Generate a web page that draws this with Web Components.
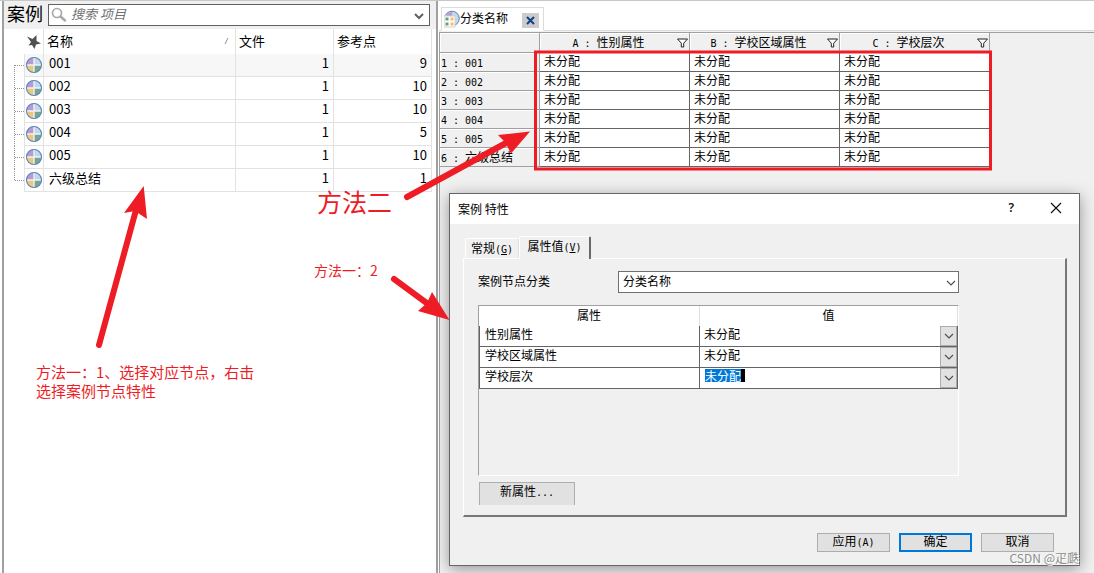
<!DOCTYPE html>
<html lang="zh-CN">
<head>
<meta charset="utf-8">
<title>案例</title>
<style>
  html, body { margin: 0; height: 100%; }
  body { overflow: hidden; background: #fff; color: #000; font: 13px/17px "Noto Sans CJK SC", sans-serif; }
</style>
</head>
<body>
<app-workspace>
  <case-list slot="list"></case-list>
  <class-sheet slot="sheet"></class-sheet>
  <case-dialog slot="dialog"></case-dialog>
  <mark-layer slot="marks"></mark-layer>
</app-workspace>

<script>
const define = (name, html) => customElements.define(name, class extends HTMLElement {
  constructor() {
    super();
    const root = this.attachShadow({ mode: 'open' });
    const t = document.createElement('template');
    t.innerHTML = '<style>*{box-sizing:border-box}</style>' + (typeof html === 'function' ? html(this) : html);
    root.append(t.content.cloneNode(true));
  }
});

define('case-icon', `
  <style>:host{display:block;width:18px;height:18px} svg{display:block}</style>
  <svg width="18" height="18" viewBox="0 0 18 18" aria-hidden="true">
    <circle cx="9" cy="9" r="8" fill="#eef3f8"/>
    <path d="M8.300 8.300H1.500A7.500 7.500 0 0 1 8.300 1.500z" fill="#b89bd0"/>
    <path d="M9.700 8.300h6.800A7.500 7.500 0 0 0 9.700 1.500z" fill="#c4d6e8"/>
    <path d="M8.300 9.700H1.500A7.500 7.500 0 0 0 8.300 16.500z" fill="#f0c67c"/>
    <path d="M9.700 9.700h6.800A7.500 7.500 0 0 1 9.700 16.500z" fill="#78a592"/>
    <circle cx="9" cy="9" r="7.500" fill="none" stroke="#5486bd" stroke-width="1.100"/>
  </svg>`);

define('tree-branch', el => {
  const kind = el.getAttribute('kind');
  const top = kind === 'first' ? 11 : 0, end = kind === 'last' ? 12 : 23;
  return `<style>:host{display:block} svg{display:block}</style>
  <svg width="20" height="23" viewBox="0 0 20 23" aria-hidden="true">
    <path d="M10.500 ${top}V${end}M11 11.500H20" stroke="#909090" stroke-dasharray="1 1" fill="none"/>
  </svg>`;
});

const cases = [['001',1,9],['002',1,10],['003',1,10],['004',1,5],['005',1,10],['六级总结',1,1]];

define('case-list', `
  <style>
    :host{display:block;height:100%;background:#fff}
    .bar{display:flex;align-items:center;gap:5px;height:28px;padding:0 6px 0 3px;background:#f0f0f0}
    h1{margin:0 0 4px;font-size:18px;line-height:24px;font-weight:400}
    .search{flex:1;display:flex;align-items:center;height:22px;border:1px solid #606060;background:#fff;padding:0 4px 0 2px}
    .search input{flex:1;min-width:0;border:0;outline:0;padding:0 0 2px 4px;font:italic 13px/18px "Noto Sans CJK SC",sans-serif;background:none}
    .search input::placeholder{color:#707070;opacity:1}
    .search button{border:0;background:none;padding:0;height:18px;width:12px}
    svg{display:block}
    table{table-layout:fixed;border-collapse:separate;border-spacing:0;width:calc(100% - 4px)}
    th{height:25px;padding:0 0 2px 3px;text-align:left;font-weight:400;border-right:1px solid #e2e2e2}
    th:first-child{border-right-color:transparent}
    th.pin{padding:0 0 0 1px}
    td{height:23px;padding:0 4px 5px 5px;border:solid #e2e2e2;border-width:0 1px 1px 0}
    td.tree{padding:0;border-bottom:0}
    td.icon{padding:0}
    td.n{text-align:right}
    tr.on td:not(.tree){background:#f7f7f7}
    .name{display:flex;justify-content:space-between;align-items:center;padding-right:6px}
  </style>
  <div class="bar">
    <h1>案例</h1>
    <div class="search">
      <svg width="16" height="16" viewBox="0 0 16 16" aria-hidden="true"><circle cx="6" cy="6" r="4.500" fill="none" stroke="#a8a8a8" stroke-width="1.700"/><path d="M9.500 9.500L14 13.500" stroke="#a8a8a8" stroke-width="2.500" stroke-linecap="round"/></svg>
      <input type="text" placeholder="搜索 项目" aria-label="搜索 项目">
      <button aria-label="展开"><svg width="12" height="18" viewBox="0 0 12 18"><path d="M2 8l4 4 4-4" fill="none" stroke="#606060" stroke-width="2"/></svg></button>
    </div>
  </div>
  <table>
    <colgroup><col style="width:21px"><col style="width:19px"><col><col style="width:98px"><col style="width:98px"></colgroup>
    <thead><tr>
      <th></th>
      <th class="pin"><svg width="16" height="16" viewBox="0 0 16 16" aria-hidden="true"><path d="M1 2.500L6.500 5 10.500 1 10.500 7 15 9.500 10 10.500 8.500 15 6 11 2.500 11.500 5 8z" fill="#505050"/></svg></th>
      <th><div class="name"><span>名称</span><svg width="5" height="8" viewBox="0 0 5 8" aria-hidden="true"><path d="M1 7L4 1" stroke="#909090"/></svg></div></th>
      <th>文件</th><th>参考点</th>
    </tr></thead>
    <tbody>${cases.map((c, i) => `<tr class="${i ? '' : 'on'}">
      <td class="tree"><tree-branch kind="${i === 0 ? 'first' : i === cases.length - 1 ? 'last' : 'mid'}"></tree-branch></td>
      <td class="icon"><case-icon></case-icon></td>
      <td>${c[0]}</td><td class="n">${c[1]}</td><td class="n">${c[2]}</td></tr>`).join('')}</tbody>
  </table>`);

const funnel = `<svg width="11" height="10" viewBox="0 0 11 10" aria-hidden="true"><path d="M.500 1h10L6.700 5.200V9H4.300V5.200z" fill="#fff" stroke="#222"/></svg>`;

define('class-sheet', `
  <style>
    :host{display:flex;flex-direction:column;height:100%;background:#f0f0f0}
    .tabs{display:flex;align-items:flex-end;height:30px;background:#fff;border-bottom:1px solid #dcdcdc;padding-left:2px}
    .tab{display:flex;align-items:center;height:24px;margin-bottom:-1px;padding:0 4px 0 2px;border:1px solid #dcdcdc;border-bottom-color:#fff;background:#fff;font-size:12px;line-height:16px}
    .tab span{margin:0 14px 2px 0}
    .tab button{width:17px;height:15px;margin-top:2px;padding:0;border:0;background:#ccc;display:grid;place-items:center}
    svg{display:block}
    .grid{border-top:1px solid #a0a0a0;border-left:1px solid #a0a0a0;margin-top:1px;flex:1}
    table{table-layout:fixed;border-collapse:separate;border-spacing:0;width:550px;font-size:12px;line-height:15px}
    th{font-weight:400;background:#f0f0f0;border:solid #a0a0a0;border-width:0 1px 1px 0;box-shadow:inset 1px 1px #fff;padding:0}
    thead th{height:20px}
    thead th div{display:flex;align-items:center;padding-right:1px}
    thead th div span{flex:1;text-align:center}
    tbody th{text-align:left;padding-left:1px;white-space:nowrap}
    td{height:19px;background:#fff;border:solid #646464;border-width:0 1px 1px 0;padding:0 0 3px 4px}
    i{font:10px/15px "DejaVu Sans Mono",monospace;white-space:pre}
  </style>
  <div class="tabs"><div class="tab">
    <svg width="16" height="18" viewBox="0 0 16 18" aria-hidden="true">
      <circle cx="8" cy="8.500" r="7.300" fill="#c4d6e8" stroke="#5486bd"/><path d="M8 8V2a6 6 0 0 0-6 6z" fill="#b89bd0"/>
      <path d="M0 6h11v11H0z" fill="#fff" stroke="#d8d0c0"/><path d="M1.500 7.500h3v3h-3zM1.500 12.500h3v3h-3z" fill="#6a9c84"/><path d="M6.500 7.500h3v3h-3zM6.500 12.500h3v3h-3z" fill="#edc070"/>
    </svg>
    <span>分类名称</span>
    <button aria-label="关闭"><svg width="9" height="9" viewBox="0 0 9 9"><path d="M1 1l7 7M8 1L1 8" stroke="#153f88" stroke-width="2"/></svg></button>
  </div></div>
  <div class="grid"><table>
    <colgroup><col style="width:100px"><col><col><col></colgroup>
    <thead><tr><th></th>${[['A','性别属性'],['B','学校区域属性'],['C','学校层次']].map(h => `<th><div><span><i>${h[0]} : </i>${h[1]}</span>${funnel}</div></th>`).join('')}</tr></thead>
    <tbody>${cases.map((c, i) => `<tr><th><i>${i + 1} : ${i < 5 ? c[0] : ''}</i>${i < 5 ? '' : c[0]}</th><td>未分配</td><td>未分配</td><td>未分配</td></tr>`).join('')}</tbody>
  </table></div>`);

define('push-button', `
  <style>
    :host{display:block}
    button{display:block;width:100%;height:19px;padding:0 0 3px;border:1px solid #adadad;background:#e1e1e1;color:#000;font:12px/14px "Noto Sans CJK SC",sans-serif}
    :host([primary]) button{border:2px solid #0078d7;padding:0 0 3px;line-height:12px}
    :host([tall]) button{height:23px;border-bottom:0}
    ::slotted(i){font:10px/12px "DejaVu Sans Mono",monospace}
  </style><button><slot></slot></button>`);

const chev = `<svg width="10" height="8" viewBox="0 0 10 8" aria-hidden="true"><path d="M1 2l4 4 4-4" fill="none" stroke="#505050" stroke-width="1.200"/></svg>`;

define('case-dialog', `
  <style>
    :host{display:block;border:1px solid #666;background:#f0f0f0;box-shadow:0 3px 14px rgba(0,0,0,.38);font-size:12px;line-height:16px}
    svg{display:block}
    header{display:flex;align-items:center;height:30px;background:#fff;padding:0 17px 0 8px}
    h2{flex:1;margin:0;font-size:12px;font-weight:400}
    header button{border:0;background:none;padding:0 0 2px;font:600 12px/16px "Noto Sans",sans-serif;color:#111}
    header button:last-child{margin-left:36px}
    .body{padding:11px 12px 13px 13px}
    .tabs{display:flex;align-items:flex-end;height:23px;padding-left:2px}
    .tabs button{font:12px/16px "Noto Sans CJK SC",sans-serif;color:#000;background:#f0f0f0;border:1px solid #fff;border-bottom:0;border-right-color:#e0e0e0;height:20px;width:54px;padding:0;white-space:nowrap;border-radius:2px 2px 0 0}
    .tabs button.on{height:23px;width:72px;margin-bottom:-1px;padding:0 0 2px;border-right:2px solid #696969;position:relative}
    i{font:10px/16px "DejaVu Sans Mono",monospace}
    .page{border:solid;border-width:1px 2px 2px 1px;border-color:#fff #777 #777 #fff;height:259px;padding:12px 106px 0 14px}
    .field{display:flex;align-items:center;height:22px}
    .field label{width:140px;padding-bottom:2px}
    .pick{position:relative;flex:1;display:flex}
    select{appearance:none;border:0;border-radius:0;outline:0;background:#fff;color:#000;font:12px/16px "Noto Sans CJK SC",sans-serif;flex:1;min-width:0;padding:0 0 2px 4px}
    .field select{height:22px;border:1px solid #707070}
    .field svg{position:absolute;right:3px;top:8px}
    .box{margin-top:12px;height:171px;border:1px solid;border-color:#a0a0a0 #fff #fff #a0a0a0}
    table{table-layout:fixed;width:100%;border-collapse:separate;border-spacing:0;background:#fff}
    th{font-weight:400;height:20px;padding:0 0 2px;border-right:1px solid #e0e0e0}
    td{height:21px;padding:0 0 0 5px;border:solid #646464;border-width:0 1px 1px 0;line-height:15px}
    td:first-child{border-left-width:1px;padding-bottom:5px}
    td:last-child{padding:0}
    .cell{display:flex;height:20px}
    .cell select{padding-bottom:5px}
    .edit{flex:1;display:flex;align-items:flex-start;padding:1px 0 0 5px}
    .edit input{width:36px;height:13px;border:0;outline:0;padding:0;margin:0;background:#0078d7;color:#fff;font:12px/13px "Noto Sans CJK SC",sans-serif}
    .edit span{width:4px;height:13px;background:#000}
    .cell button{width:17px;height:20px;padding:0;border:1px solid #adadad;background:#e1e1e1;display:grid;place-items:center}
    .new{width:96px;margin:6px 0 0 1px}
    .foot{display:flex;justify-content:flex-end;gap:9px;margin-top:16px;padding-right:13px}
    .foot push-button{width:73px}
  </style>
  <header><h2>案例 特性</h2><button aria-label="帮助">?</button><button aria-label="关闭"><svg width="12" height="12" viewBox="0 0 12 12"><path d="M1 1l10 10M11 1L1 11" stroke="#111" stroke-width="1.200"/></svg></button></header>
  <div class="body">
    <div class="tabs"><button>常规<i>(<u>G</u>)</i></button><button class="on">属性值<i>(<u>V</u>)</i></button></div>
    <div class="page">
      <div class="field"><label for="kind">案例节点分类</label><div class="pick"><select id="kind"><option>分类名称</option></select>${chev}</div></div>
      <div class="box"><table>
        <colgroup><col style="width:221px"><col></colgroup>
        <thead><tr><th>属性</th><th>值</th></tr></thead>
        <tbody>
          ${['性别属性','学校区域属性'].map(n => `<tr><td>${n}</td><td><div class="cell"><select aria-label="${n}"><option>未分配</option></select><button aria-label="展开">${chev}</button></div></td></tr>`).join('')}
          <tr><td>学校层次</td><td><div class="cell"><div class="edit"><input type="text" value="未分配" aria-label="学校层次"><span></span></div><button aria-label="展开">${chev}</button></div></td></tr>
        </tbody>
      </table></div>
      <push-button class="new" tall>新属性<i>...</i></push-button>
    </div>
    <div class="foot"><push-button>应用<i>(A)</i></push-button><push-button primary>确定</push-button><push-button>取消</push-button></div>
  </div>`);

define('mark-layer', `
  <style>
    :host{display:block;color:#ee1c25}
    svg{position:absolute;left:0;top:0}
    p{position:absolute;margin:0;white-space:nowrap}
    .two{left:317px;top:183px;font-size:25px;line-height:36px}
    .next{left:314px;top:260px;font-size:14px;line-height:20px}
    .one{left:36px;top:362px;font-size:15px;line-height:19px}
    .wm{right:15px;bottom:7px;font-size:12px;line-height:18px;color:#8c8c8c;text-shadow:1px 1px #fff}
  </style>
  <svg width="1000" height="360" viewBox="0 0 1000 360" aria-hidden="true">
    <rect x="535.500" y="52" width="455" height="117" fill="none" stroke="#ee1c25" stroke-width="3"/>
    <g stroke="#ee1c25" stroke-width="6" stroke-linecap="round"><path d="M99 345L136 210M407 197L506 143M394 279L428 304"/></g>
    <g fill="#ee1c25"><path d="M143.700 186L124 213 135 211 147 219z"/><path d="M530 131.500L498 135 505 142 511 153.500z"/><path d="M449.500 320L432 292 427 303 418 311z"/></g>
  </svg>
  <p class="two">方法二</p>
  <p class="next">方法一：2</p>
  <p class="one">方法一：1、选择对应节点，右击<br>选择案例节点特性</p>
  <p class="wm">CSDN @疋瓞</p>`);

define('app-workspace', `
  <style>
    :host{display:flex;position:relative;height:100vh;border-top:1px solid #c8c8c8;padding-left:2px}
    .left{flex:0 0 436px;border:solid #a0a0a0;border-width:0 2px}
    .right{flex:1;min-width:0;position:relative;margin-left:1px}
    .dialog{position:absolute;left:10px;right:14px;top:192px}
    .marks{position:absolute;inset:-1px 0 0 0;pointer-events:none}
  </style>
  <div class="left"><slot name="list"></slot></div>
  <div class="right"><slot name="sheet"></slot><div class="dialog"><slot name="dialog"></slot></div></div>
  <div class="marks"><slot name="marks"></slot></div>`);
</script>
</body>
</html>
